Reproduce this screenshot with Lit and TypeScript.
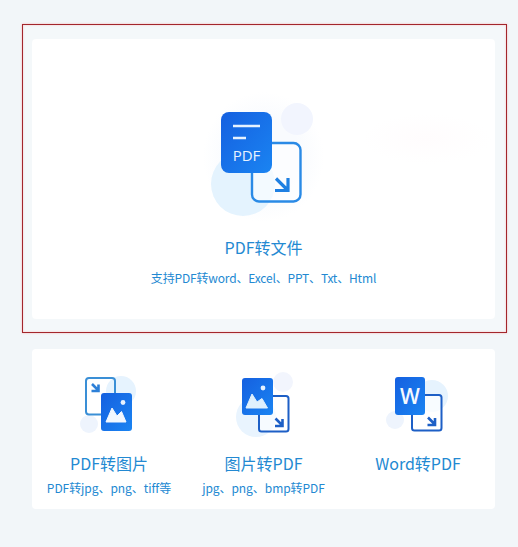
import { LitElement, html, css, svg } from "lit";
import { customElement } from "lit/decorators.js";

const grad = (id: string) => svg`
  <defs>
    <linearGradient id=${id} x1="0" y1="0" x2="1" y2="1">
      <stop offset="0" stop-color="#1560e0"/>
      <stop offset="1" stop-color="#1a84f2"/>
    </linearGradient>
  </defs>`;

const mainIcon = html`
  <svg class="main-icon" width="121" height="130" viewBox="203 92 121 130">
    ${grad("g0")}
    <defs>
      <radialGradient id="halo">
        <stop offset="0.6" stop-color="#f9fbfe"/>
        <stop offset="1" stop-color="#ffffff"/>
      </radialGradient>
    </defs>
    <rect x="203" y="92" width="121" height="130" fill="url(#halo)"/>
    <circle cx="243" cy="184" r="32" fill="#e4f3fe"/>
    <circle cx="297" cy="119" r="16" fill="#f2f5fe"/>
    <rect x="252" y="143" width="48.500" height="58.500" rx="7" fill="#ffffff" fill-opacity=".55" stroke="#2a8ae6" stroke-width="2.400"/>
    <rect x="221" y="112" width="51" height="61" rx="8" fill="url(#g0)"/>
    <path d="M233 126h27M233 138h13" stroke="#e6f2ff" stroke-width="2.600" fill="none"/>
    <text x="246.500" y="160.500" class="pdf">PDF</text>
    <path d="M276 178.500L288 190.500M288 178v12.500h-13" stroke="#1f80e2" stroke-width="3.200" fill="none"/>
  </svg>`;

const pdfToImage = html`
  <svg class="small-icon" width="80" height="70" viewBox="69 370 80 70">
    ${grad("g1")}
    <circle cx="121" cy="391" r="15" fill="#e6f3fe"/>
    <circle cx="89" cy="424" r="9" fill="#eef4fd"/>
    <path d="M101 414.500H89a3 3 0 0 1-3-3V381a3 3 0 0 1 3-3h23a3 3 0 0 1 3 3v12" fill="none" stroke="#3a8fd6" stroke-width="2"/>
    <path d="M92 384L98.500 390.500M98.500 384.500v6.500h-7" fill="none" stroke="#2d80d8" stroke-width="2.600"/>
    <rect x="101" y="393" width="31" height="38" rx="3" fill="url(#g1)"/>
    <circle cx="123" cy="402.500" r="2.400" fill="#e6f2ff"/>
    <path d="M106 422L112 408L117 416L121.500 411.500L126 422Z" fill="#f2f8ff" stroke="#f2f8ff" stroke-linejoin="round"/>
  </svg>`;

const imageToPdf = html`
  <svg class="small-icon" width="81" height="70" viewBox="223 370 81 70">
    ${grad("g2")}
    <circle cx="256" cy="417" r="20" fill="#e9f4fe"/>
    <circle cx="283" cy="382" r="10" fill="#f2f5fd"/>
    <rect x="259" y="396" width="29.500" height="35.500" rx="2.500" fill="#ffffff" fill-opacity=".6" stroke="#1d5fc6" stroke-width="2"/>
    <rect x="242" y="378" width="31" height="37" rx="3" fill="url(#g2)"/>
    <circle cx="263" cy="388" r="2.400" fill="#e6f2ff"/>
    <path d="M246 408L252 394L257 402L262 398.500L267.500 408Z" fill="#dff0fd" stroke="#dff0fd" stroke-linejoin="round"/>
    <path d="M275.500 418.500L282.500 425.500M282.500 419v7h-7.500" fill="none" stroke="#1d5fc6" stroke-width="2.600"/>
  </svg>`;

const wordToPdf = html`
  <svg class="small-icon" width="80" height="70" viewBox="378 370 80 70">
    ${grad("g3")}
    <circle cx="432" cy="396" r="16" fill="#e6f3fe"/>
    <circle cx="395" cy="420" r="9" fill="#eef4fd"/>
    <rect x="412" y="395" width="29.500" height="35.500" rx="2.500" fill="#ffffff" fill-opacity=".7" stroke="#1d5fc6" stroke-width="2"/>
    <rect x="395" y="377" width="30" height="38" rx="3" fill="url(#g3)"/>
    <text x="410" y="404" class="w">W</text>
    <path d="M428 417.500L435 424.500M435 418v7h-7.500" fill="none" stroke="#1d5fc6" stroke-width="2.600"/>
  </svg>`;

@customElement("app-root")
export class AppRoot extends LitElement {
  static styles = css`
    :host {
      display: block;
      width: 518px;
      height: 547px;
      box-sizing: border-box;
      padding: 24px 0 0 22px;
      background: #f2f6f9;
      font-family: "Noto Sans CJK SC", sans-serif;
      color: #2389d2;
      overflow: hidden;
    }
    .frame {
      box-sizing: border-box;
      width: 485px;
      height: 309px;
      padding: 14px 11px 0 9px;
      border: 1px solid #a3262c;
      box-shadow: 0 0 2px rgba(255, 60, 60, 0.35), inset 0 0 2px rgba(255, 60, 60, 0.3);
      background: #f4f8fa;
    }
    .card {
      background: #fff;
      border-radius: 4px;
    }
    .main {
      box-sizing: border-box;
      height: 280px;
      padding-top: 53px;
      display: flex;
      flex-direction: column;
      align-items: center;
      background:
        radial-gradient(ellipse 65px 25px at 395px 100px, #fffcfd, #ffffff00),
        #fff;
    }
    svg { display: block; }
    .pdf {
      font: 500 15px "Open Sans", sans-serif;
      fill: #e6f2ff;
      text-anchor: middle;
    }
    .w {
      font: 600 21px "Open Sans", sans-serif;
      fill: #f4f9ff;
      text-anchor: middle;
    }
    .title {
      font-size: 16px;
      line-height: 20px;
      white-space: nowrap;
    }
    .sub {
      font-size: 12px;
      line-height: 16px;
      white-space: nowrap;
    }
    .main .title { margin-top: 15px; }
    .main .sub { margin-top: 13px; letter-spacing: -0.17px; }
    .row {
      box-sizing: border-box;
      width: 463px;
      height: 160px;
      margin: 16px 0 0 10px;
      padding-top: 21px;
      display: grid;
      grid-template-columns: 154px 155px 154px;
    }
    .item {
      display: flex;
      flex-direction: column;
      align-items: center;
    }
    .item .title { margin-top: 13px; }
    .item .sub { margin-top: 7px; letter-spacing: -0.05px; }
  `;

  render() {
    return html`
      <div class="frame">
        <div class="card main">
          ${mainIcon}
          <div class="title">PDF转文件</div>
          <div class="sub">支持PDF转word、Excel、PPT、Txt、Html</div>
        </div>
      </div>
      <div class="card row">
        <div class="item">
          ${pdfToImage}
          <div class="title">PDF转图片</div>
          <div class="sub">PDF转jpg、png、tiff等</div>
        </div>
        <div class="item">
          ${imageToPdf}
          <div class="title">图片转PDF</div>
          <div class="sub">jpg、png、bmp转PDF</div>
        </div>
        <div class="item">
          ${wordToPdf}
          <div class="title">Word转PDF</div>
        </div>
      </div>
    `;
  }
}
